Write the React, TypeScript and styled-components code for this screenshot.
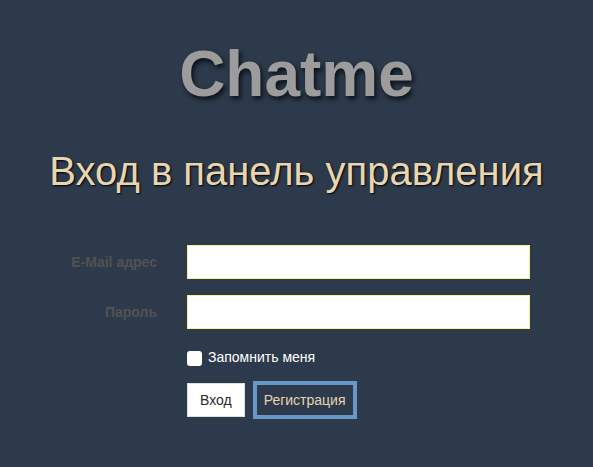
import React from "react";
import styled, { createGlobalStyle } from "styled-components";

const GlobalStyle = createGlobalStyle`
  html, body {
    margin: 0;
    padding: 0;
    background: #2c3a4c;
  }
  body {
    font-family: "Liberation Sans", Arial, sans-serif;
  }
`;

const Page = styled.div`
  width: 593px;
  height: 467px;
  background: #2c3a4c;
  overflow: hidden;
`;

const Logo = styled.h1`
  margin: 0;
  padding-top: 37px;
  text-align: center;
  font-size: 64px;
  line-height: 74px;
  font-weight: bold;
  color: #9c9c9c;
  text-shadow: 2px 3px 5px rgba(0, 0, 0, 0.75);
`;

const Heading = styled.h2`
  margin: 0;
  margin-top: 37px;
  text-align: center;
  font-size: 40px;
  line-height: 46px;
  font-weight: normal;
  color: #e9d6b0;
  text-shadow: 1px 1px 2px #000;
`;

const Form = styled.form`
  display: grid;
  grid-template-columns: 157px 343px;
  column-gap: 30px;
  row-gap: 16px;
  margin-top: 51px;
  align-items: center;
`;

const Label = styled.label`
  text-align: right;
  font-size: 14px;
  font-weight: bold;
  color: #525252;
`;

const Input = styled.input`
  box-sizing: border-box;
  width: 343px;
  height: 34px;
  border: 1px solid #f4f488;
  background: #fff;
  outline: none;
`;

const Remember = styled.div`
  grid-column: 2;
  display: flex;
  align-items: center;
  gap: 6px;
  margin-top: 2px;
  font-size: 14px;
  color: #fff;
`;

const Checkbox = styled.span`
  width: 15px;
  height: 15px;
  border-radius: 3px;
  background: #fff;
  margin-top: 4px;
`;

const Actions = styled.div`
  grid-column: 2;
  display: flex;
  align-items: center;
  gap: 8px;
  margin-top: -1px;
`;

const Button = styled.button<{ secondary?: boolean }>`
  box-sizing: border-box;
  font-family: "Liberation Sans", Arial, sans-serif;
  font-size: 14px;
  cursor: pointer;
  height: ${({ secondary }) => (secondary ? "38px" : "34px")};
  padding: 0 ${({ secondary }) => (secondary ? "7px" : "12px")};
  background: ${({ secondary }) => (secondary ? "#2c3a4c" : "#fff")};
  color: ${({ secondary }) => (secondary ? "#e6d3b0" : "#2a2a2a")};
  border: ${({ secondary }) =>
    secondary ? "4px solid #6b96c8" : "1px solid #ddd"};
`;

export default function App() {
  return (
    <Page>
      <GlobalStyle />
      <Logo>Chatme</Logo>
      <Heading>Вход в панель управления</Heading>
      <Form onSubmit={(e) => e.preventDefault()}>
        <Label>E-Mail адрес</Label>
        <Input type="email" />
        <Label>Пароль</Label>
        <Input type="password" />
        <Remember>
          <Checkbox />
          Запомнить меня
        </Remember>
        <Actions>
          <Button>Вход</Button>
          <Button secondary>Регистрация</Button>
        </Actions>
      </Form>
    </Page>
  );
}
